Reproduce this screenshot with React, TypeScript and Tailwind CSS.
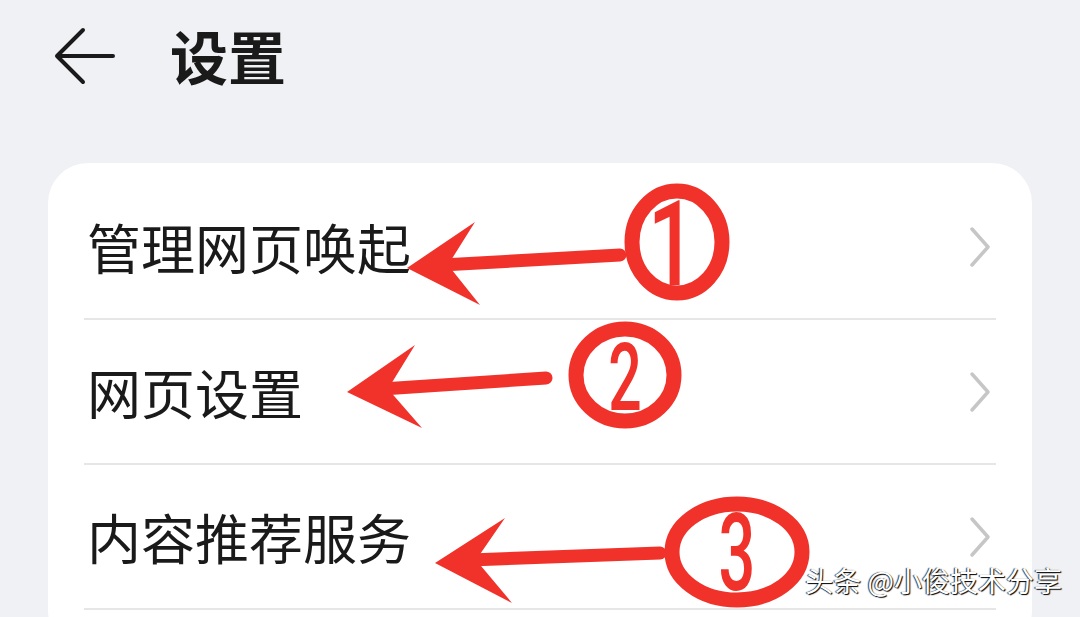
import { ReactNode } from "react";

const rows = ["管理网页唤起", "网页设置", "内容推荐服务"];

const Chevron = () => (
  <svg width="24" height="42" viewBox="0 0 24 42" fill="none">
    <polyline points="4,3 20,21 4,39" stroke="#c6c6c6" strokeWidth="3.5" strokeLinecap="round" strokeLinejoin="round" />
  </svg>
);

const Row = ({ label }: { label: string }) => (
  <div className="mx-[36px] h-[145px] flex items-center justify-between pl-[3px] pr-[4px] border-b-2 border-[#e6e6e6]">
    <span className="text-[54px] leading-none text-[#1a1a1a]">{label}</span>
    <Chevron />
  </div>
);

// red annotation: swept arrow head + thick shaft + circled digit
const Pointer = ({
  tip,
  top,
  notch,
  bottom,
  end,
  children,
}: {
  tip: [number, number];
  top: [number, number];
  notch: [number, number];
  bottom: [number, number];
  end: [number, number];
  children?: ReactNode;
}) => (
  <g>
    <polygon points={[tip, top, notch, bottom].map((p) => p.join(",")).join(" ")} fill="#f1322b" />
    <line x1={notch[0] - 6} y1={notch[1]} x2={end[0]} y2={end[1]} stroke="#f1322b" strokeWidth="13" strokeLinecap="round" />
    {children}
  </g>
);

const Digit = ({ x, y, size, sx, children }: { x: number; y: number; size: number; sx: number; children: string }) => (
  <text
    x={x}
    y={y}
    textAnchor="middle"
    fontSize={size}
    fontFamily="Roboto, 'Liberation Sans', sans-serif"
    fontWeight="500"
    fill="#f1322b"
    transform={`translate(${x} 0) scale(${sx} 1) translate(${-x} 0)`}
  >
    {children}
  </text>
);

export default function App() {
  return (
    <div className="relative w-[1080px] h-[617px] overflow-hidden bg-[#f0f1f5] font-['Noto_Sans_CJK_SC','Noto_Sans',sans-serif]">
      <header className="h-[112px] flex items-center pl-[53px]">
        <svg width="62" height="58" viewBox="0 0 62 58" fill="none">
          <path d="M4 29 H60 M4 29 L30 3 M4 29 L30 55" stroke="#1a1a1a" strokeWidth="4" strokeLinecap="round" strokeLinejoin="round" />
        </svg>
        <h1 className="ml-[55px] mt-[-2px] text-[58px] leading-none font-bold text-[#1a1a1a]">设置</h1>
      </header>

      <div className="mt-[51px] mx-[48px] rounded-[40px] bg-white pt-[12px] pb-[40px]">
        {rows.map((r) => (
          <Row key={r} label={r} />
        ))}
      </div>

      <svg className="absolute inset-0 pointer-events-none" width="1080" height="617" viewBox="0 0 1080 617">
        <Pointer tip={[407, 268]} top={[475, 222]} notch={[448, 265]} bottom={[480, 305]} end={[620, 255]}>
          <ellipse cx="677" cy="242" rx="45" ry="51" fill="none" stroke="#f1322b" strokeWidth="15" />
          <Digit x={672} y={285} size={118} sx={0.72}>1</Digit>
        </Pointer>
        <Pointer tip={[347, 392]} top={[415, 345]} notch={[388, 389]} bottom={[422, 428]} end={[546, 378]}>
          <ellipse cx="625" cy="375" rx="49" ry="46" fill="none" stroke="#f1322b" strokeWidth="15" />
          <Digit x={625} y={410} size={95} sx={0.62}>2</Digit>
        </Pointer>
        <Pointer tip={[435, 563]} top={[505, 518]} notch={[476, 560]} bottom={[512, 603]} end={[660, 553]}>
          <ellipse cx="737" cy="552" rx="65" ry="48" fill="none" stroke="#f1322b" strokeWidth="15" />
          <Digit x={737} y={590} size={108} sx={0.6}>3</Digit>
        </Pointer>
      </svg>

      <div className="absolute right-[18px] top-[566px] text-[28px] leading-none text-white [text-shadow:1px_1px_1px_#000,-1px_0_1px_#333]">
        头条 @小俊技术分享
      </div>
    </div>
  );
}
